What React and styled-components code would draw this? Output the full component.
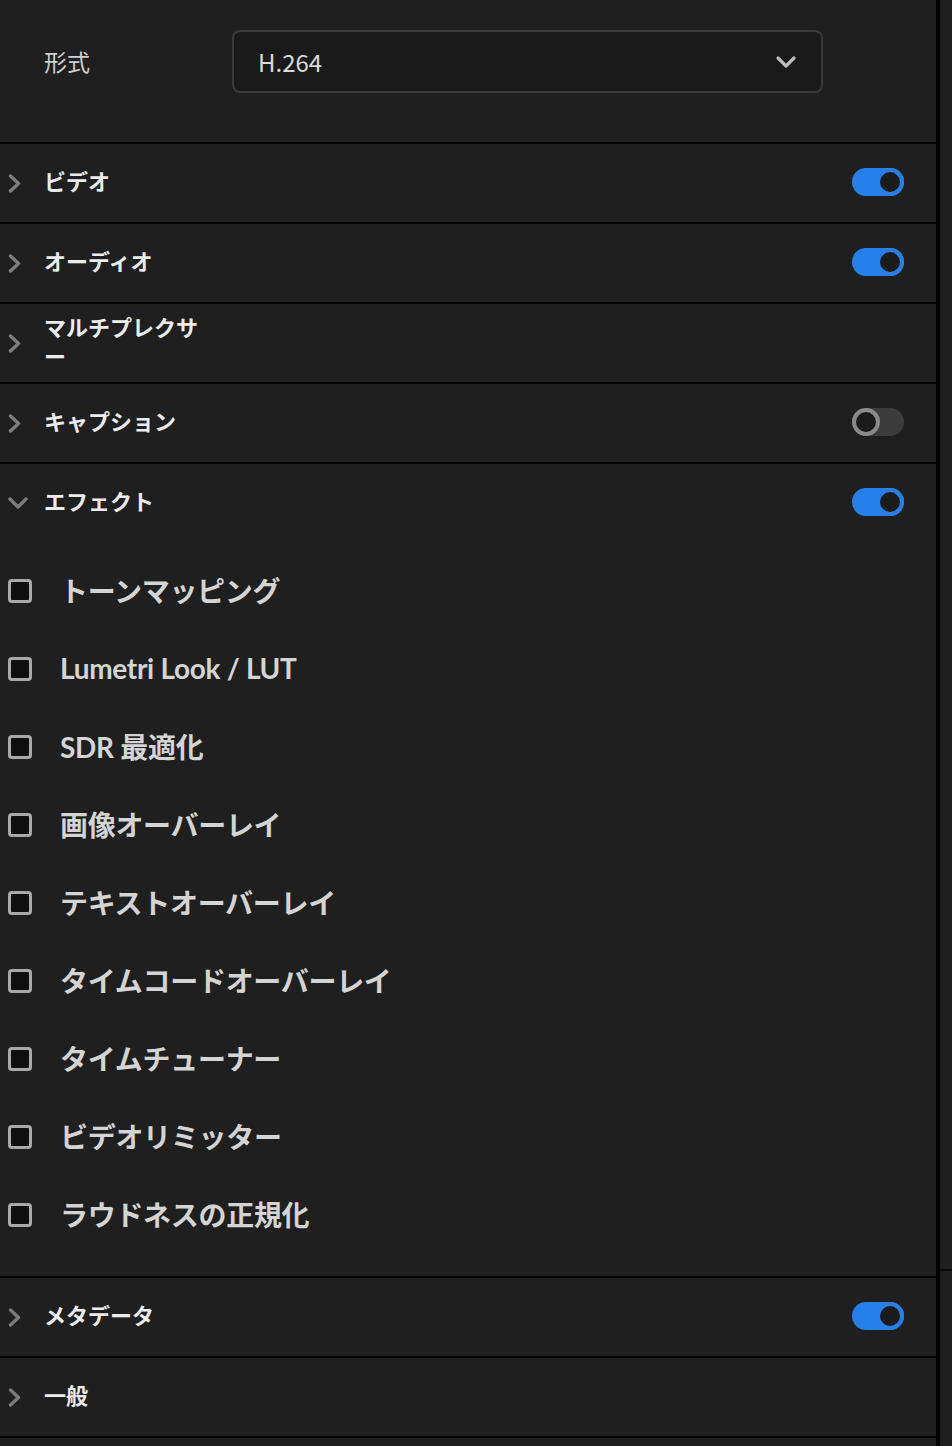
import styled, { createGlobalStyle } from "styled-components";

const Global = createGlobalStyle`
body {
  margin: 0;
  background: #1f1f1f;
  font-family: "Noto Sans CJK JP", "Noto Sans", sans-serif;
}
`;

const Page = styled.div`
display: flex;
width: 952px;
height: 1446px;
overflow: hidden;
`;

const Panel = styled.div`
width: 936px;
background: #1f1f1f;
display: flex;
flex-direction: column;
`;

const Divider = styled.div`
width: 4px;
background: #000;
`;

const Strip = styled.div`
flex: 1;
display: flex;
flex-direction: column;
`;

const StripPart = styled.div`
height: ${p => p.h ? p.h + 'px' : 'auto'};
flex: ${p => p.h ? 'none' : 1};
background: #1f1f1f;
border-top: ${p => p.line ? '2px solid #0a0a0a' : 'none'};
`;

const FormatRow = styled.div`
height: 142px;
box-sizing: border-box;
padding: 30px 0 0 44px;
display: flex;
align-items: flex-start;
`;

const FormatLabel = styled.div`
width: 188px;
line-height: 63px;
font-size: 23px;
color: #cfcfcf;
`;

const Select = styled.div`
width: 591px;
height: 63px;
box-sizing: border-box;
border: 2px solid #3a3a3a;
border-radius: 8px;
background: #1a1a1a;
display: flex;
align-items: center;
justify-content: space-between;
padding: 0 24px 0 24px;
font-size: 24px;
color: #dadada;
`;

const Section = styled.div`
border-top: 2px solid #050505;
`;

const Header = styled.div`
height: 78px;
display: flex;
align-items: center;
padding: 0 32px 0 8px;
`;

const Title = styled.div`
margin-left: ${p => p.open ? '16px' : '23px'};
margin-bottom: 5px;
max-width: 160px;
font-size: 22px;
line-height: 29px;
font-weight: 700;
color: #ececec;
`;

const Spacer = styled.div`
flex: 1;
`;

const Track = styled.div`
position: relative;
width: 52px;
height: 28px;
margin-bottom: 2px;
border-radius: 14px;
background: ${p => p.on ? '#2680eb' : '#3b3b3b'};
`;

const Knob = styled.div`
position: absolute;
top: 0;
left: ${p => p.on ? '24px' : '0'};
width: 28px;
height: 28px;
box-sizing: border-box;
border-radius: 50%;
border: 4px solid ${p => p.on ? '#2680eb' : '#8a8a8a'};
background: #1b1b1b;
`;

const Body = styled.div`
padding: 10px 0 22px;
`;

const Item = styled.div`
height: 78px;
display: flex;
align-items: center;
padding-left: 8px;
`;

const Box = styled.div`
width: 24px;
height: 24px;
box-sizing: border-box;
border: 3px solid #a9a9a9;
border-radius: 4px;
background: #0f0f0f;
`;

const ItemLabel = styled.div`
margin-left: 28px;
margin-bottom: 2px;
font-family: Lato, "Noto Sans CJK JP", sans-serif;
font-size: 28px;
font-weight: 700;
letter-spacing: -0.3px;
color: #d4d4d4;
`;

const Chevron = ({ open }) => open ? (
  <svg width="20" height="14" viewBox="0 0 20 14">
    <path d="M2 3 L10 11 L18 3" fill="none" stroke="#7c7c7c" strokeWidth="3.4" strokeLinecap="round" strokeLinejoin="round" />
  </svg>
) : (
  <svg width="13" height="19" viewBox="0 0 13 19">
    <path d="M2.5 2 L10.5 9.5 L2.5 17" fill="none" stroke="#7c7c7c" strokeWidth="3.4" strokeLinecap="round" strokeLinejoin="round" />
  </svg>
);

const Toggle = ({ on }) => (
  <Track on={on ? 1 : 0}>
    <Knob on={on ? 1 : 0} />
  </Track>
);

const effects = [
  'トーンマッピング',
  'Lumetri Look / LUT',
  'SDR 最適化',
  '画像オーバーレイ',
  'テキストオーバーレイ',
  'タイムコードオーバーレイ',
  'タイムチューナー',
  'ビデオリミッター',
  'ラウドネスの正規化',
];

const SectionRow = ({ title, toggle, open, children }) => (
  <Section>
    <Header>
      <Chevron open={open} />
      <Title open={open}>{title}</Title>
      <Spacer />
      {toggle !== undefined && <Toggle on={toggle} />}
    </Header>
    {children}
  </Section>
);

export default function App() {
  return (
    <Page>
      <Global />
      <Panel>
        <FormatRow>
          <FormatLabel>形式</FormatLabel>
          <Select>
            <span>H.264</span>
            <svg width="22" height="14" viewBox="0 0 22 14">
              <path d="M3 3 L11 11 L19 3" fill="none" stroke="#bdbdbd" strokeWidth="3.2" strokeLinecap="round" strokeLinejoin="round" />
            </svg>
          </Select>
        </FormatRow>
        <SectionRow title="ビデオ" toggle={true} />
        <SectionRow title="オーディオ" toggle={true} />
        <SectionRow title="マルチプレクサー" />
        <SectionRow title="キャプション" toggle={false} />
        <SectionRow title="エフェクト" toggle={true} open>
          <Body>
            {effects.map(e => (
              <Item key={e}>
                <Box />
                <ItemLabel>{e}</ItemLabel>
              </Item>
            ))}
          </Body>
        </SectionRow>
        <SectionRow title="メタデータ" toggle={true} />
        <SectionRow title="一般" />
        <Section />
      </Panel>
      <Divider />
      <Strip>
        <StripPart h={1269} />
        <StripPart line />
      </Strip>
    </Page>
  );
}
